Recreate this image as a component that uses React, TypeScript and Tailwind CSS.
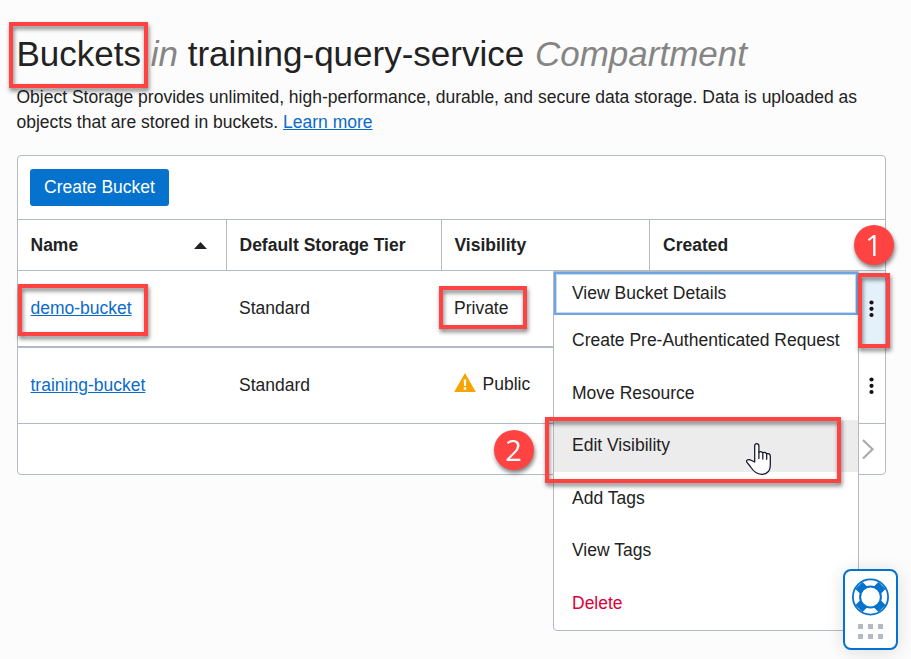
import React from "react";

const menuItems = [
  "Create Pre-Authenticated Request",
  "Move Resource",
  "Edit Visibility",
  "Add Tags",
  "View Tags",
  "Delete",
];

function Callout({ className }: { className: string }) {
  return (
    <div
      className={`pointer-events-none absolute border-4 border-[#ff4343] drop-shadow-[1px_3px_2px_rgba(0,0,0,0.5)] ${className}`}
    />
  );
}

function Step({ n, className }: { n: number; className: string }) {
  return (
    <div
      className={`absolute flex size-10 items-center justify-center rounded-full bg-[#ff4343] pb-[2px] pr-px font-['Open_Sans',sans-serif] text-[29px] leading-none text-white drop-shadow-[1px_3px_2px_rgba(0,0,0,0.5)] ${className}`}
    >
      {n}
    </div>
  );
}

function Kebab() {
  return (
    <svg width="6" height="18" viewBox="0 0 6 18" fill="#111">
      <circle cx="2.5" cy="2.5" r="2.1" />
      <circle cx="2.5" cy="8.8" r="2.1" />
      <circle cx="2.5" cy="15" r="2.1" />
    </svg>
  );
}

function ActionsMenu() {
  return (
    <div className="absolute left-[553px] top-[271px] h-[360px] w-[306px] rounded-b border border-[#b4bac3] bg-white">
      <div className="flex h-[43px] items-center border-2 border-[#6ea4e0] pl-4 shadow-[inset_0_0_0_1px_#c5dbf4]">
        View Bucket Details
      </div>
      <div className="-mt-[0.45px]">
        {menuItems.map((item) => (
          <div
            key={item}
            className={`flex h-[52.5px] items-center whitespace-nowrap pl-[18px] ${
              item === "Edit Visibility" ? "bg-[#ececec]" : ""
            } ${item === "Delete" ? "text-[#dc0038]" : ""}`}
          >
            {item}
          </div>
        ))}
      </div>
    </div>
  );
}

function HandCursor() {
  return (
    <svg
      className="absolute left-[745px] top-[442px]"
      width="28"
      height="34"
      viewBox="0 0 28 34"
      fill="#fff"
      stroke="#15152b"
      strokeWidth="1.25"
      strokeLinejoin="round"
      strokeLinecap="round"
    >
      <path d="M9.7 20V3.7Q9.9 1.6 11.8 1.6Q13.7 1.6 13.9 3.7V10.2Q15.7 8.8 17.8 10.8Q19.9 9.8 21.7 11.7Q24.8 11 25.3 13.8V23.3C25.3 29 22 32.3 16.5 32.3C11.5 32.3 8.2 29 5.3 24.5L1.8 20.1Q1 18.6 2.8 17.8Q4.6 17.1 6.2 18.3Z" />
      <path d="M13.9 10.2V16.5M17.8 10.8V17M21.7 11.7V17.3" fill="none" />
    </svg>
  );
}

function HelpWidget() {
  return (
    <div className="absolute left-[843px] top-[569px] flex h-[81px] w-[55px] flex-col items-center rounded-lg border-2 border-[#0572ce] bg-white pt-[7px] shadow-[0_2px_18px_rgba(0,0,0,0.12)]">
      <svg width="38" height="38" viewBox="0 0 38 38" fill="none">
        <path d="M7 7.5L30 30.5M30 7.5L7 30.5" stroke="#0572ce" strokeWidth="10" />
        <circle cx="18.5" cy="19" r="17.6" stroke="#0572ce" strokeWidth="1.8" />
        <circle cx="18.5" cy="19" r="10.4" fill="#fff" stroke="#0572ce" strokeWidth="2" />
      </svg>
      <div className="mt-[8px] grid grid-cols-3 gap-[5px]">
        {[0, 1, 2, 3, 4, 5].map((i) => (
          <span key={i} className="size-[5px] bg-[#b4bac3]" />
        ))}
      </div>
    </div>
  );
}

export default function App() {
  return (
    <div className="relative h-[659px] w-[911px] overflow-hidden bg-[#fcfcfc] pl-[17px] font-['Liberation_Sans',Arial,sans-serif] text-[17.5px] leading-[25px] text-[#222]">
      <h1 className="-ml-[0.5px] whitespace-nowrap pt-[34px] text-[35px] leading-10">
        Buckets <i className="text-[#858585]">in</i> training-query-service{" "}
        <i className="ml-px text-[#858585]">Compartment</i>
      </h1>
      <p className="-ml-[0.5px] mt-[11px] w-[869px]">
        Object Storage provides unlimited, high-performance, durable, and secure data storage. Data is uploaded as
        <br />
        objects that are stored in buckets.{" "}
        <a className="text-[#0b6bcb] underline">Learn more</a>
      </p>

      <div className="mt-5 flex h-[320px] w-[869px] flex-col rounded border border-[#b4bac3] bg-white">
        <div className="h-16 border-b border-[#b4bac3] pl-3 pt-[13px]">
          <button className="flex h-[37px] w-[139px] items-center justify-center rounded-[3px] bg-[#0572ce] text-white">
            Create Bucket
          </button>
        </div>
        <div className="flex h-[51px] border-b border-[#b4bac3] font-bold">
          <div className="flex w-[209px] items-center justify-between border-r border-[#b4bac3] pl-[12.5px] pr-[19px]">
            Name
            <svg width="13" height="7" viewBox="0 0 13 7" fill="#222">
              <path d="M6.5 0L13 7H0Z" />
            </svg>
          </div>
          <div className="flex w-[215px] items-center border-r border-[#b4bac3] pl-[12.5px]">Default Storage Tier</div>
          <div className="flex w-[208px] items-center border-r border-[#b4bac3] pl-[12.5px]">Visibility</div>
          <div className="flex items-center pl-[13px]">Created</div>
        </div>
        <div className="flex h-[77px] border-b-2 border-[#b4bac3]">
          <div className="flex w-[209px] items-center pl-[12.5px]">
            <a className="text-[#0b6bcb] underline">demo-bucket</a>
          </div>
          <div className="flex w-[215px] items-center pl-3">Standard</div>
          <div className="flex w-[208px] items-center pl-3">Private</div>
          <div className="ml-auto flex w-[26px] items-center justify-center bg-[#e4f1fb]">
            <Kebab />
          </div>
        </div>
        <div className="flex h-[76px] border-b border-[#b4bac3]">
          <div className="flex w-[209px] items-center pl-[12.5px]">
            <a className="text-[#0b6bcb] underline">training-bucket</a>
          </div>
          <div className="flex w-[215px] items-center pl-3">Standard</div>
          <div className="flex w-[208px] items-center pb-[2px] pl-3">
            <svg className="mr-[6.5px] mt-[-4px]" width="22" height="19" viewBox="0 0 22 19">
              <path d="M11 0L21.8 19H.2Z" fill="#f7a400" />
              <path d="M9.7 6.5H12.3L11.9 13H10.1ZM9.8 14.3H12.2V16.7H9.8Z" fill="#fff" />
            </svg>
            Public
          </div>
          <div className="ml-auto flex w-[26px] items-center justify-center">
            <Kebab />
          </div>
        </div>
        <div className="flex flex-1 items-center justify-end pr-[10px]">
          <svg width="13" height="22" viewBox="0 0 13 22" fill="none" stroke="#aaa" strokeWidth="2.2">
            <path d="M1 2L10.5 11.3L1 20.5" />
          </svg>
        </div>
      </div>

      <ActionsMenu />
      <Callout className="left-[9px] top-[22px] h-[66px] w-[139px]" />
      <Callout className="left-[18px] top-[284px] h-[52px] w-[130px]" />
      <Callout className="left-[439px] top-[286px] h-[43px] w-[88px]" />
      <Callout className="left-[858px] top-[273px] h-[75px] w-[32px]" />
      <Callout className="left-[545px] top-[417px] h-[66px] w-[296px]" />
      <Step n={1} className="left-[854px] top-[225px]" />
      <Step n={2} className="left-[494px] top-[430px]" />
      <HandCursor />
      <HelpWidget />
    </div>
  );
}
